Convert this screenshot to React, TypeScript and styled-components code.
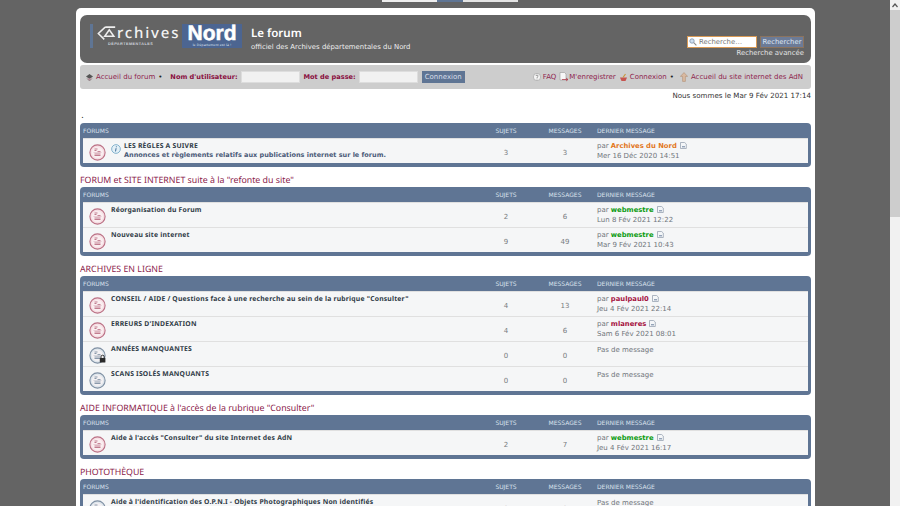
import React from "react";
import styled, { createGlobalStyle } from "styled-components";

const Global = createGlobalStyle`
  html, body { margin: 0; padding: 0; height: 100%; overflow: hidden; background: #646464; }
  #root { height: 100%; }
  * { box-sizing: border-box; }
`;

const Screen = styled.div`
  display: flex; width: 900px; height: 506px; overflow: hidden; background: #646464;
  font-family: "DejaVu Sans", Verdana, sans-serif; font-size: 7px; color: #536482; text-rendering: geometricPrecision;
`;
const Viewport = styled.div`flex: 1; height: 506px; overflow: hidden; padding-left: 76px;`;
const TabStrip = styled.div`display: flex; height: 8px; padding-left: 306px; align-items: flex-start;`;
const TopTab = styled.div<{ $w: number; $c: string }>`width: ${p => p.$w}px; height: 2px; background: ${p => p.$c};`;
const Wrap = styled.div`width: 739px; background: #fff; border-radius: 5px 5px 0 0; padding: 7px 4px 0 4px;`;

const Header = styled.header`
  height: 48px; background: #646464; border-radius: 7px; display: flex; padding: 9px 7px 0 10px; color: #fff;
`;
const LogoBar = styled.div`width: 3px; height: 24px; background: #5f7594;`;
const LogoMark = styled.div`width: 89px; height: 24px; display: flex; flex-direction: column; padding-left: 4px;`;
const LogoWord = styled.div`display: flex; align-items: center; height: 18px;`;
const LogoText = styled.span`font: 500 15px "Noto Sans", sans-serif; letter-spacing: 1.8px; color: #f2f2f2;`;
const LogoSub = styled.span`font: bold 3.8px "Liberation Sans", sans-serif; letter-spacing: .45px; color: #cfd4dc; padding-left: 11px;`;
const NordBox = styled.div`
  width: 60px; height: 24px; background: #4c6591; display: flex; flex-direction: column; align-items: center; line-height: 1;
`;
const NordWord = styled.span`font: 900 21px/19px "Liberation Sans", sans-serif; color: #fff; -webkit-text-stroke: .5px #fff; height: 19px;`;
const NordSub = styled.span`font: 3.4px/4px "Liberation Sans", sans-serif; color: #dfe4ee; letter-spacing: .2px;`;
const SiteText = styled.div`margin-left: 9px; padding-top: 3px; display: flex; flex-direction: column;`;
const SiteTitle = styled.div`font: 600 11.5px/14px "Noto Sans", sans-serif; color: #fff;`;
const SiteDesc = styled.div`font: 6.9px/10px "DejaVu Sans", sans-serif; color: #eee; margin-top: 1px;`;
const SearchCol = styled.div`margin-left: auto; padding-top: 12px; display: flex; flex-direction: column; align-items: flex-end;`;
const SearchRow = styled.div`display: flex; gap: 3px;`;
const SearchInput = styled.div`
  width: 70px; height: 12px; background: #fff; border: 1px solid #d99a55; display: flex; align-items: center; gap: 2px;
  color: #777; font: 6.9px "DejaVu Sans", sans-serif; padding-left: 1px;
`;
const SearchBtn = styled.div`
  width: 44px; height: 12px; background: #6c7b97; border: 1px solid #8b735e; color: #dde6f5; display: flex; align-items: center; justify-content: center;
  font: 6.9px "DejaVu Sans", sans-serif;
`;
const AdvLink = styled.div`color: #e4e4e4; font: 6.9px/10px "DejaVu Sans", sans-serif; margin-top: 0;`;

const Nav = styled.nav`
  height: 24px; margin-top: 2px; background: #cdcdcd; border-radius: 3px; display: flex; align-items: center; padding: 0 8px 0 5px; color: #8f1f4d;
  font-size: 7px;
`;
const NavLink = styled.span<{ $gap?: number }>`display: inline-flex; align-items: center; gap: ${p => p.$gap ?? 2}px; color: #8f1f4d; white-space: nowrap;`;
const Dot = styled.span<{ $before?: number; $after?: number }>`color: #222; margin: 0 ${p => p.$after ?? 4}px 0 ${p => p.$before ?? 3}px;`;
const FieldLabel = styled.b`color: #8a0f40; font-weight: bold; font-size: 6.6px; margin-right: 3px; white-space: nowrap;`;
const NavInput = styled.div`width: 59px; height: 12px; background: #f1f1f1; border: 1px solid #ddd; margin-right: 4px;`;
const LoginBtn = styled.div`
  height: 12px; width: 43px; background: #5f7594; color: #d7deea; display: flex; align-items: center; justify-content: center;
`;
const NavRight = styled.div`margin-left: auto; display: flex; align-items: center; gap: 3px;`;

const DateLine = styled.div`height: 14px; text-align: right; color: #333; font-size: 7.1px; line-height: 14px;`;
const Period = styled.div`height: 20px; color: #222; line-height: 12px; padding-top: 7px; padding-left: 1px; font-size: 9px;`;

const Section = styled.section`margin-bottom: 7px;`;
const SectionTitle = styled.h2`
  margin: 0; height: 13px; font: 400 8.8px/13px "Noto Sans", sans-serif; color: #8a1a4a;
`;
const Block = styled.div`background: #5f7594; border-radius: 4px; padding: 0 3px 4px;`;
const HeadRow = styled.div`
  height: 15px; padding-top: 2px; display: grid; grid-template-columns: 1fr 58px 60px 213px; align-items: center; color: #d9e1ec; font-size: 6px;
`;
const HeadCell = styled.span<{ $center?: boolean; $pad?: number }>`
  text-align: ${p => p.$center ? "center" : "left"}; padding-left: ${p => p.$pad ?? 0}px; white-space: nowrap;
`;
const Row = styled.div`
  height: 25px; background: #f5f6f7; border-top: 1px solid #e0e0e0; display: grid; grid-template-columns: 1fr 58px 60px 213px;
  &:first-of-type { border-top: 0; }
`;
const Main = styled.div`display: flex; align-items: flex-start; padding: 2px 0 0 6px; min-width: 0;`;
const IconSlot = styled.div`width: 17px; height: 17px; margin-top: 3px; margin-right: 5px; flex: none;`;
const InfoSlot = styled.div`width: 10px; height: 10px; margin: 3px 3px 0 0; flex: none;`;
const RowText = styled.div`display: flex; flex-direction: column; min-width: 0;`;
const ForumName = styled.div`font: 700 6.8px/10px "Noto Sans", "DejaVu Sans", sans-serif; color: #2f3a46; white-space: nowrap; letter-spacing: .2px;`;
const ForumDesc = styled.div`font: bold 6.5px/9px "DejaVu Sans", sans-serif; color: #4a5a78; white-space: nowrap;`;
const Count = styled.div`display: flex; align-items: center; justify-content: center; color: #777b80; font-size: 7px; padding-top: 3px;`;
const Last = styled.div`padding: 3px 0 0 2px; font-size: 7px; line-height: 9.5px; color: #70757b;`;
const Author = styled.b<{ $c: string }>`color: ${p => p.$c}; font-size: 6.8px;`;
const AuthorLine = styled.div`white-space: pre;`;
const NoMessage = styled.div`white-space: pre; margin-top: 1px;`;
const PostSlot = styled.span`display: inline-block; margin-left: 3px; vertical-align: -1px; line-height: 0;`;

const Scrollbar = styled.aside`width: 10px; height: 506px; background: #f1f1f1; display: flex; flex-direction: column;`;
const ScrollBtn = styled.div`height: 10px; display: flex; align-items: center; justify-content: center; background: #f1f1f1;`;
const ScrollThumb = styled.div`height: 207px; background: #cdcdcd;`;

const FolderIcon = ({ tone, lock }: { tone: "red" | "blue"; lock?: boolean }) => {
  const c = tone === "red" ? "#bb6f84" : "#7e8fa3";
  const bg = tone === "red" ? "#f6dfe4" : "#dfe6ec";
  return (
    <svg width="17" height="17" viewBox="0 0 17 17">
      <circle cx="8.5" cy="8.5" r="7.6" fill={bg} stroke={c} strokeWidth="1.1" />
      <circle cx="8.5" cy="8.5" r="5.6" fill="#fbf4f5" opacity=".75" />
      <path d="M5.500 5h3M5.500 6.500h2M5.500 10h6M5.500 11.500h6M8.500 7.600h3" stroke={c} strokeWidth=".9" />
      <path d="M4.500 8.400h8" stroke={c} strokeWidth=".5" opacity=".6" />
      {lock && (
        <g>
          <path d="M12 11V9.800a1.600 1.600 0 0 1 3.200 0V11" fill="none" stroke="#222" strokeWidth=".9" />
          <rect x="10.800" y="11" width="5.600" height="4.600" rx=".6" fill="#2a2a2a" />
        </g>
      )}
    </svg>
  );
};

const InfoIcon = () => (
  <svg width="10" height="10" viewBox="0 0 11 11">
    <circle cx="5.5" cy="5.5" r="4.8" fill="#e3f0f7" stroke="#6fa5c4" strokeWidth=".9" />
    <path d="M5.900 2.600v1M5.600 4.600 5 8.200" stroke="#3f6d99" strokeWidth="1.1" fill="none" />
  </svg>
);

const PostIcon = () => (
  <svg width="7" height="7" viewBox="0 0 7 7">
    <path d="M.5.5h4.200l1.600 1.600v4.400H.5z" fill="#f4f6f8" stroke="#8c9aa9" strokeWidth=".7" />
    <path d="M2 4.800h3" stroke="#5f7594" strokeWidth=".9" />
  </svg>
);

const HomeIcon = () => (
  <svg width="9" height="9" viewBox="0 0 9 9">
    <path d="M1 3.500 4.500 1 8 3.500 4.500 6z" fill="#555" />
    <path d="M2 5.500 4.500 8 7 5.500" fill="#b98a99" stroke="#777" strokeWidth=".6" />
  </svg>
);
const FaqIcon = () => (
  <svg width="8" height="8" viewBox="0 0 8 8">
    <circle cx="4" cy="4" r="3.600" fill="#f5f5f5" stroke="#9a9a9a" strokeWidth=".6" />
    <path d="M3 3a1 1 0 1 1 1.400 1L4 4.800M4 5.600v.8" stroke="#666" strokeWidth=".7" fill="none" />
  </svg>
);
const RegIcon = () => (
  <svg width="10" height="10" viewBox="0 0 10 10">
    <path d="M1 .5h4.500L7 2v6H1z" fill="#f7f7f7" stroke="#999" strokeWidth=".6" />
    <path d="M3 7.500h6M7 6l2 1.500L7 9" stroke="#b0404f" strokeWidth=".8" fill="none" />
  </svg>
);
const LoginIcon = () => (
  <svg width="9" height="9" viewBox="0 0 9 9">
    <path d="M1 4.500h7L6.500 8h-4z" fill="#c65450" />
    <path d="M6.500 1 4 4.500" stroke="#c9973d" strokeWidth="1.200" />
  </svg>
);
const UpIcon = () => (
  <svg width="8" height="10" viewBox="0 0 8 10">
    <path d="M4 .6 7.600 4.400H5.400V9.400H2.600V4.400H.4z" fill="#d9b9a0" stroke="#a98468" strokeWidth=".5" />
  </svg>
);
const SearchGlyph = () => (
  <svg width="8" height="8" viewBox="0 0 8 8">
    <circle cx="3" cy="3" r="2.200" fill="#cfe0f2" stroke="#7f93ab" strokeWidth=".8" />
    <path d="M4.700 4.700 7.400 7.400" stroke="#8a8a8a" strokeWidth="1.100" />
  </svg>
);
const LogoArrow = () => (
  <svg width="20" height="17" viewBox="0 0 22 17">
    <path d="M9 1.500h11M9 1.500 1.500 8.500 8 15" fill="none" stroke="#eee" strokeWidth="1.700" />
    <path d="M8.500 11.500 13.500 4.500 18.500 11.500z" fill="none" stroke="#eee" strokeWidth="1.700" />
  </svg>
);

type RowData = {
  name: string; desc?: string; info?: boolean; tone?: "red" | "blue"; lock?: boolean;
  s: number; m: number; author?: string; color?: string; date?: string;
};
const cols = ["SUJETS", "MESSAGES"];
const Forum = ({ d }: { d: RowData }) => (
  <Row>
    <Main>
      <IconSlot><FolderIcon tone={d.tone ?? "red"} lock={d.lock} /></IconSlot>
      {d.info && <InfoSlot><InfoIcon /></InfoSlot>}
      <RowText>
        <ForumName>{d.name}</ForumName>
        {d.desc && <ForumDesc>{d.desc}</ForumDesc>}
      </RowText>
    </Main>
    <Count>{d.s}</Count>
    <Count>{d.m}</Count>
    <Last>
      {d.author ? (
        <>
          <AuthorLine>par <Author $c={d.color!}>{d.author}</Author><PostSlot><PostIcon /></PostSlot></AuthorLine>
          <div>{d.date}</div>
        </>
      ) : (
        <NoMessage>Pas de message</NoMessage>
      )}
    </Last>
  </Row>
);

const ForumBlock = ({ rows }: { rows: RowData[] }) => (
  <Block>
    <HeadRow>
      <HeadCell>FORUMS</HeadCell>
      {cols.map(c => <HeadCell key={c} $center>{c}</HeadCell>)}
      <HeadCell $pad={2}>DERNIER MESSAGE</HeadCell>
    </HeadRow>
    {rows.map(r => <Forum key={r.name} d={r} />)}
  </Block>
);

const green = "#0d9c12";
const sections: { title: string; rows: RowData[] }[] = [
  { title: 'FORUM et SITE INTERNET suite à la "refonte du site"', rows: [
    { name: "Réorganisation du Forum", s: 2, m: 6, author: "webmestre", color: green, date: "Lun 8 Fév 2021 12:22" },
    { name: "Nouveau site internet", s: 9, m: 49, author: "webmestre", color: green, date: "Mar 9 Fév 2021 10:43" },
  ]},
  { title: "ARCHIVES EN LIGNE", rows: [
    { name: 'CONSEIL / AIDE / Questions face à une recherche au sein de la rubrique "Consulter"', s: 4, m: 13, author: "paulpaul0", color: "#a5123f", date: "Jeu 4 Fév 2021 22:14" },
    { name: "ERREURS D'INDEXATION", s: 4, m: 6, author: "mlaneres", color: "#a5123f", date: "Sam 6 Fév 2021 08:01" },
    { name: "ANNÉES MANQUANTES", s: 0, m: 0, tone: "blue", lock: true },
    { name: "SCANS ISOLÉS MANQUANTS", s: 0, m: 0, tone: "blue" },
  ]},
  { title: 'AIDE INFORMATIQUE à l\'accès de la rubrique "Consulter"', rows: [
    { name: 'Aide à l\'accès "Consulter" du site Internet des AdN', s: 2, m: 7, author: "webmestre", color: green, date: "Jeu 4 Fév 2021 16:17" },
  ]},
  { title: "PHOTOTHÈQUE", rows: [
    { name: "Aide à l'identification des O.P.N.I - Objets Photographiques Non identifiés", s: 0, m: 0, tone: "blue" },
  ]},
];

export default function App() {
  return (
    <Screen>
      <Global />
      <Viewport>
        <TabStrip>
          <TopTab $w={55} $c="#eeeeee" />
          <TopTab $w={26} $c="#5f7594" />
          <TopTab $w={55} $c="#e4e4e4" />
        </TabStrip>
        <Wrap>
          <Header>
            <LogoBar />
            <LogoMark>
              <LogoWord><LogoArrow /><LogoText>rchives</LogoText></LogoWord>
              <LogoSub>DÉPARTEMENTALES</LogoSub>
            </LogoMark>
            <NordBox>
              <NordWord>Nord</NordWord>
              <NordSub>le Département est là !</NordSub>
            </NordBox>
            <SiteText>
              <SiteTitle>Le forum</SiteTitle>
              <SiteDesc>officiel des Archives départementales du Nord</SiteDesc>
            </SiteText>
            <SearchCol>
              <SearchRow>
                <SearchInput><SearchGlyph />Recherche…</SearchInput>
                <SearchBtn>Rechercher</SearchBtn>
              </SearchRow>
              <AdvLink>Recherche avancée</AdvLink>
            </SearchCol>
          </Header>
          <Nav>
            <NavLink><HomeIcon />Accueil du forum</NavLink>
            <Dot $after={8}>•</Dot>
            <FieldLabel>Nom d'utilisateur:</FieldLabel>
            <NavInput />
            <FieldLabel>Mot de passe:</FieldLabel>
            <NavInput />
            <LoginBtn>Connexion</LoginBtn>
            <NavRight>
              <NavLink><FaqIcon />FAQ</NavLink>
              <NavLink $gap={0}><RegIcon />M'enregistrer</NavLink>
              <NavLink><LoginIcon />Connexion</NavLink>
              <Dot $before={0} $after={3}>•</Dot>
              <NavLink $gap={3}><UpIcon />Accueil du site internet des AdN</NavLink>
            </NavRight>
          </Nav>
          <DateLine>Nous sommes le Mar 9 Fév 2021 17:14</DateLine>
          <Period>.</Period>
          <Section>
            <ForumBlock rows={[{
              name: "LES RÈGLES A SUIVRE", desc: "Annonces et règlements relatifs aux publications internet sur le forum.",
              info: true, s: 3, m: 3, author: "Archives du Nord", color: "#e2761c", date: "Mer 16 Déc 2020 14:51",
            }]} />
          </Section>
          {sections.map(s => (
            <Section key={s.title}>
              <SectionTitle>{s.title}</SectionTitle>
              <ForumBlock rows={s.rows} />
            </Section>
          ))}
        </Wrap>
      </Viewport>
      <Scrollbar>
        <ScrollBtn>
          <svg width="6" height="5" viewBox="0 0 6 5"><path d="M.5 4 3 1l2.500 3" fill="none" stroke="#555" strokeWidth="1.2" /></svg>
        </ScrollBtn>
        <ScrollThumb />
      </Scrollbar>
    </Screen>
  );
}
